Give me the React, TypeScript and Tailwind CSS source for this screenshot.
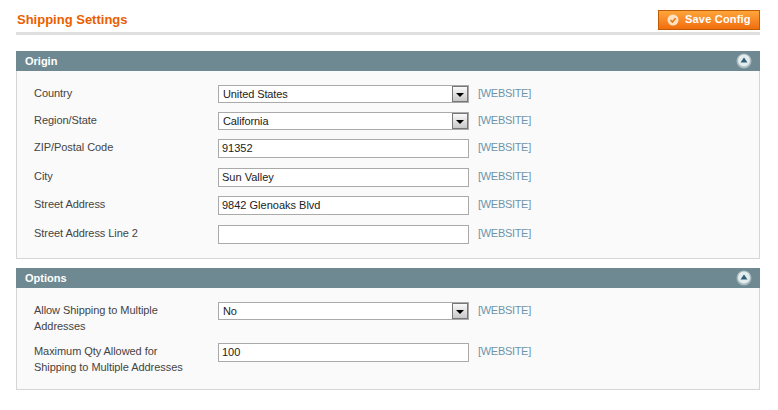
function Collapse() {
  return (
    <svg width="16" height="16" viewBox="0 0 16 16">
      <circle cx="8" cy="8" r="7.5" fill="#a9bcc1" />
      <circle cx="8" cy="7.5" r="6" fill="#e4ecee" />
      <path d="M8 4.5 L11.5 9.5 H4.5 Z" fill="#2f5f74" />
    </svg>
  )
}

function Scope() {
  return <span className="block text-[11px] leading-[13px] tracking-[-0.3px] text-[#6d95ac]">[WEBSITE]</span>
}

function Row({ label, value, select, className }: { label: string; value: string; select?: boolean; className: string }) {
  return (
    <div className={`flex items-start ${className}`}>
      <label className="w-[184px] pr-6 text-[11px] leading-4 tracking-[-0.06px] text-[#444]">{label}</label>
      {select ? (
        <div className="flex h-[18px] w-[251px] items-center justify-between border border-[#aaa] bg-white pl-1 text-[11px] tracking-[-0.1px] text-[#222]">
          <span>{value}</span>
          <span className="flex h-4 w-4 items-center justify-center border border-[#777] bg-gradient-to-b from-[#fafafa] to-[#c8c8c8] pt-[2px]">
            <svg width="8" height="4" viewBox="0 0 8 4">
              <path d="M0 0 H8 L4 4 Z" fill="#000" />
            </svg>
          </span>
        </div>
      ) : (
        <div className="flex h-[19px] w-[251px] items-center border border-[#aaa] bg-white pl-[3px] text-[11px] text-[#222]">
          {value}
        </div>
      )}
      <div className="ml-[9px] pt-[2px]">
        <Scope />
      </div>
    </div>
  )
}

function SectionHeader({ title }: { title: string }) {
  return (
    <div className="flex h-5 items-center justify-between bg-[#6f8992] pl-[9px] pr-2 text-[11px] font-bold text-white">
      <span>{title}</span>
      <Collapse />
    </div>
  )
}

export default function App() {
  return (
    <div className="h-[410px] w-[778px] overflow-hidden bg-white pl-4 pr-[18px] pt-[7px] font-['Liberation_Sans',Arial,sans-serif]">
      <div className="flex h-[25px] items-center justify-between">
        <h3 className="pl-px text-[13px] font-bold text-[#eb5e00]">Shipping Settings</h3>
        <button className="flex h-[20px] w-[102px] items-center border border-[#bf5a07] bg-gradient-to-b from-[#ffa53a] to-[#f06d0a] pl-2 text-[11px] font-bold tracking-[0.2px] text-white">
          <svg width="12" height="12" viewBox="0 0 12 12" className="mr-[6px]">
            <circle cx="6" cy="6" r="5.5" fill="#fde3c4" />
            <path d="M3.5 6 L5.4 8 L8.6 4.2" fill="none" stroke="#e8730f" strokeWidth="1.6" />
          </svg>
          Save Config
        </button>
      </div>
      <div className="mb-4 h-[3px] bg-[#dfdfdf]" />

      <SectionHeader title="Origin" />
      <div className="mb-[9px] h-[188px] border border-t-0 border-[#d6d6d6] bg-[#fafafa] pl-[17px] pt-[14px]">
        <Row label="Country" value="United States" select className="mb-[9px]" />
        <Row label="Region/State" value="California" select className="mb-[9px]" />
        <Row label="ZIP/Postal Code" value="91352" className="mb-[10px]" />
        <Row label="City" value="Sun Valley" className="mb-[9px]" />
        <Row label="Street Address" value="9842 Glenoaks Blvd" className="mb-[10px]" />
        <Row label="Street Address Line 2" value="" />
      </div>

      <SectionHeader title="Options" />
      <div className="h-[102px] border border-t-0 border-[#d6d6d6] bg-[#fafafa] pl-[17px] pt-[14px]">
        <Row label="Allow Shipping to Multiple Addresses" value="No" select className="mb-[9px]" />
        <Row label="Maximum Qty Allowed for Shipping to Multiple Addresses" value="100" />
      </div>
    </div>
  )
}
